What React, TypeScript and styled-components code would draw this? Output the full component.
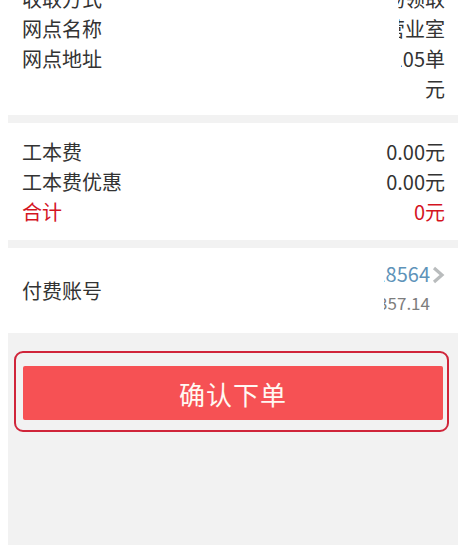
import React from 'react'
import styled, { createGlobalStyle } from 'styled-components'

const GlobalStyle = createGlobalStyle`
  html, body {
    margin: 0;
    padding: 0;
    background: #ffffff;
    overflow: hidden;
  }
  body {
    font-family: "Noto Sans CJK SC", "Noto Sans", sans-serif;
  }
`

const Page = styled.div`
  width: 450px;
  margin-left: 8px;
  min-height: calc(100vh + 16px);
  background: #f2f2f2;
  margin-top: -16px;
`

const Section = styled.div<{ $pt: number; $pb: number }>`
  background: #ffffff;
  padding: ${({ $pt }) => $pt}px 13px ${({ $pb }) => $pb}px 14px;
  & + & {
    margin-top: 8px;
  }
`

const Row = styled.div<{ $center?: boolean }>`
  display: flex;
  justify-content: space-between;
  align-items: ${({ $center }) => ($center ? 'center' : 'flex-start')};
  font-size: 20px;
  line-height: 30px;
  color: #333333;
`

const Label = styled.div<{ $red?: boolean }>`
  flex: none;
  color: ${({ $red }) => ($red ? '#d4141f' : '#333333')};
`

const Value = styled.div<{ $red?: boolean }>`
  text-align: right;
  color: ${({ $red }) => ($red ? '#d4141f' : '#333333')};
`

const ClipBox = styled.div<{ $w: number }>`
  width: ${({ $w }) => $w}px;
  display: flex;
  flex-direction: column;
  align-items: flex-end;
  overflow: hidden;
`

const ClipLine = styled.div`
  display: flex;
  justify-content: flex-end;
  width: 100%;
  white-space: nowrap;
  overflow: hidden;
`

const AccountRow = styled(Row)`
  height: 85px;
`

const AccountValue = styled.div`
  display: flex;
  align-items: flex-start;
`

const AccountLines = styled(ClipBox)`
  margin-top: -3px;
`

const AccountNo = styled(ClipLine)`
  color: #5e93b9;
  font-size: 20px;
  line-height: 28px;
`

const Balance = styled(ClipLine)`
  color: #7d7d7d;
  font-size: 17px;
  line-height: 30px;
`

const Chevron = styled.svg`
  margin-top: 3px;
  margin-left: 2px;
`

const ButtonArea = styled.div`
  padding: 18px 9px 0 6px;
`

const Ring = styled.div`
  border: 2px solid #d0253a;
  border-radius: 9px;
  padding: 13px 4px 10px 7px;
`

const SubmitButton = styled.button`
  display: block;
  width: 100%;
  height: 54px;
  border: none;
  border-radius: 2px;
  background: #f65154;
  color: #fff8f2;
  font-family: "Noto Sans CJK SC", "Noto Sans", sans-serif;
  font-size: 26px;
  letter-spacing: 1px;
  padding: 0;
`

const App = () => {
  return (
    <>
      <GlobalStyle />
      <Page>
        <Section $pt={0} $pb={11}>
          <Row>
            <Label>收取方式</Label>
            <ClipBox $w={47}>
              <ClipLine>现场领取</ClipLine>
            </ClipBox>
          </Row>
          <Row>
            <Label>网点名称</Label>
            <ClipBox $w={46}>
              <ClipLine>中心营业室</ClipLine>
            </ClipBox>
          </Row>
          <Row>
            <Label>网点地址</Label>
            <ClipBox $w={44}>
              <ClipLine>105单</ClipLine>
              <ClipLine>元</ClipLine>
            </ClipBox>
          </Row>
        </Section>
        <Section $pt={14} $pb={13}>
          <Row>
            <Label>工本费</Label>
            <Value>0.00元</Value>
          </Row>
          <Row>
            <Label>工本费优惠</Label>
            <Value>0.00元</Value>
          </Row>
          <Row>
            <Label $red>合计</Label>
            <Value $red>0元</Value>
          </Row>
        </Section>
        <Section $pt={0} $pb={0}>
          <AccountRow $center>
            <Label>付费账号</Label>
            <AccountValue>
              <AccountLines $w={46}>
                <AccountNo>18564</AccountNo>
                <Balance>3357.14</Balance>
              </AccountLines>
              <Chevron width="13" height="18" viewBox="0 0 13 18">
                <path d="M2 2 L10 9 L2 16" fill="none" stroke="#b9bcbd" strokeWidth="3.2" />
              </Chevron>
            </AccountValue>
          </AccountRow>
        </Section>
        <ButtonArea>
          <Ring>
            <SubmitButton>确认下单</SubmitButton>
          </Ring>
        </ButtonArea>
      </Page>
    </>
  )
}

export default App
